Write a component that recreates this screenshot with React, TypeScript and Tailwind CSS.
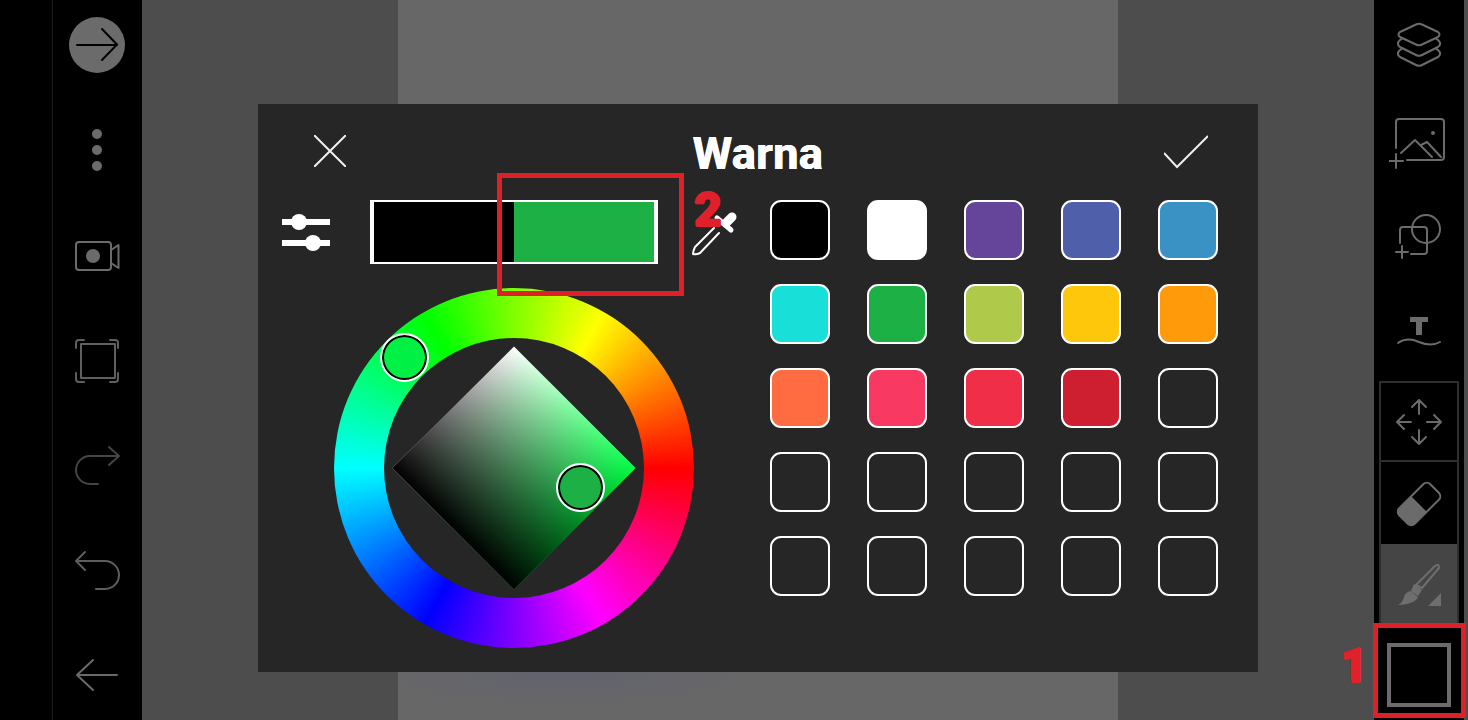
import React from 'react';

const swatches = [
  'bg-black', 'bg-white', 'bg-[#64459a]', 'bg-[#4f5fa9]', 'bg-[#3a92c4]',
  'bg-[#18dfd7]', 'bg-[#1cb045]', 'bg-[#afc94a]', 'bg-[#ffc70c]', 'bg-[#ff9a0b]',
  'bg-[#ff6c41]', 'bg-[#f83962]', 'bg-[#f12e48]', 'bg-[#cd1f2f]', 'bg-transparent',
  'bg-transparent', 'bg-transparent', 'bg-transparent', 'bg-transparent', 'bg-transparent',
  'bg-transparent', 'bg-transparent', 'bg-transparent', 'bg-transparent', 'bg-transparent',
];

function Icon({ color, children }: { color: string; children: React.ReactNode }) {
  return (
    <svg width="60" height="60" viewBox="0 0 60 60" fill="none" stroke={color} strokeWidth="2" strokeLinecap="round" strokeLinejoin="round">
      {children}
    </svg>
  );
}

function LeftBar() {
  return (
    <aside className="flex h-full w-[142px] shrink-0 bg-black">
      <div className="h-full w-[53px] border-r border-[#1c1c1c]" />
      <div className="flex h-full w-[88px] flex-col items-center justify-between py-[15px]">
        <div className="flex h-[60px] w-[60px] items-center justify-center">
          <div className="flex h-14 w-14 items-center justify-center rounded-full bg-[#6b6b6b]">
            <svg width="56" height="56" viewBox="0 0 56 56" fill="none" stroke="#000" strokeWidth="2" strokeLinecap="round">
              <path d="M8 28H48M33 12L48 27.500L33 43" />
            </svg>
          </div>
        </div>
        <div className="flex h-[60px] w-[60px] flex-col items-center justify-center gap-[6px]">
          <span className="h-[10px] w-[10px] rounded-full bg-[#6b6b6b]" />
          <span className="h-[10px] w-[10px] rounded-full bg-[#6b6b6b]" />
          <span className="h-[10px] w-[10px] rounded-full bg-[#6b6b6b]" />
        </div>
        <Icon color="#6b6b6b">
          <rect x="9" y="17" width="35" height="28" rx="3" />
          <circle cx="26" cy="31" r="7" fill="#6b6b6b" stroke="none" />
          <path d="M44 25L51.500 20V43L44 38" />
        </Icon>
        <Icon color="#5f5f5f">
          <rect x="14" y="14" width="34" height="34" />
          <path d="M9 18V13Q9 10 12 10H17M43 10H48Q51 10 51 13V18M9 43V49Q9 52 12 52H17M43 52H48Q51 52 51 49V43" />
        </Icon>
        <Icon color="#454545">
          <path d="M52 21H23A14 14 0 0 0 23 49H31M42 12L52 21L42 30" />
        </Icon>
        <Icon color="#5e5e5e">
          <path d="M9 21H38A14 14 0 0 1 38 49H29M18 12L9 21L18 30" />
        </Icon>
        <Icon color="#6a6a6a">
          <path d="M50 30H10M26 15L10 30L26 45" />
        </Icon>
      </div>
    </aside>
  );
}

function RightBar() {
  return (
    <aside className="mr-[4px] flex h-full w-[90px] shrink-0 flex-col items-center bg-black">
      <div className="flex h-[90px] items-center">
        <Icon color="#6b6b6b">
          <path d="M27 9.500Q30 8 33 9.500L49 17Q52 19.500 49 22L33 29.500Q30 31 27 29.500L11 22Q8 19.500 11 17Z" />
          <path d="M13 23.500L10.500 25.500Q7 29 11 32L27 40Q30 41.500 33 40L49 32Q53 29 49.500 25.500L47 23.500" />
          <path d="M13 33.500L10.500 35.500Q7 39 11 42L27 50Q30 51.500 33 50L49 42Q53 39 49.500 35.500L47 33.500" />
        </Icon>
      </div>
      <div className="flex h-[100px] items-center">
        <Icon color="#6b6b6b">
          <path d="M7 38V12Q7 9 10 9H52Q55 9 55 12V47Q55 50 52 50H18" />
          <path d="M7 44V58M0 51H14" />
          <circle cx="44" cy="23" r="2" fill="#6b6b6b" stroke="none" />
          <path d="M12 43L26 30L43 47M32 35L38 32L52 47" />
        </Icon>
      </div>
      <div className="flex h-[100px] items-center">
        <Icon color="#6b6b6b">
          <circle cx="37" cy="19" r="14" />
          <path d="M11 33V20Q11 17 14 17H35Q38 17 38 20V41Q38 44 35 44H22" />
          <path d="M13 36V48M7 42H19" />
        </Icon>
      </div>
      <div className="flex h-[90px] items-center">
        <Icon color="#6b6b6b">
          <path d="M21 12H39V17H33V30H27V17H21Z" fill="#6b6b6b" stroke="none" />
          <path d="M9 38C16 33 23 34 30 37S44 41 51 37" />
        </Icon>
      </div>
      <div className="mt-px flex w-[80px] flex-col border-2 border-b-0 border-[#2e2e2e]">
        <div className="flex h-[79px] items-center justify-center border-b-2 border-[#2e2e2e]">
          <Icon color="#6b6b6b">
            <path d="M30 8V22M23 15L30 8L37 15M30 52V38M23 45L30 52L37 45M8 30H22M15 23L8 30L15 37M52 30H38M45 23L52 30L45 37" />
          </Icon>
        </div>
        <div className="flex h-[82px] items-center justify-center pt-[2px]">
          <svg width="60" height="60" viewBox="0 0 60 60" fill="none" stroke="#6b6b6b" strokeWidth="2">
            <g transform="rotate(-45 30 30)">
              <rect x="8" y="19" width="44" height="22" rx="5" />
              <path d="M30 19H13Q8 19 8 24V36Q8 41 13 41H30Z" fill="#6b6b6b" stroke="none" />
            </g>
          </svg>
        </div>
        <div className="flex h-[79px] items-center justify-center bg-[#454545]">
          <svg width="60" height="60" viewBox="0 0 60 60" fill="none" stroke="#6e6e6e" strokeWidth="2" strokeLinejoin="round">
            <path d="M46 12Q50 9 50 14L33 34L27 31Z" />
            <path d="M25 30L33 36L29 42L22 37Z" fill="#6e6e6e" stroke="none" />
            <path d="M22 37L29 43Q26 50 9 51Q14 48 15 43Q16 38 22 37Z" fill="#6e6e6e" stroke="none" />
            <path d="M52 39V52H39Z" fill="#6e6e6e" stroke="none" />
          </svg>
        </div>
      </div>
      <div className="mt-[20px] h-16 w-16 border-4 border-[#6b6b6b]" />
    </aside>
  );
}

function ColorWheel() {
  return (
    <div className="relative ml-[52px] mt-6 flex h-[360px] w-[360px] items-center justify-center rounded-full bg-[conic-gradient(from_30deg,#ffff00_0deg,#ff0000_60deg,#ff00ff_120deg,#0000ff_180deg,#00ffff_240deg,#00ff00_300deg,#ffff00_360deg)]">
      <div className="flex h-[260px] w-[260px] items-center justify-center rounded-full bg-[#262626]">
        <div className="h-[172px] w-[172px] rotate-45 bg-[linear-gradient(to_top,#000000,transparent),linear-gradient(to_right,#ffffff,#00ff44)]" />
      </div>
      <div className="absolute left-[46px] top-[45px] h-[49px] w-[49px] rounded-full border-2 border-white bg-[#00f044] shadow-[inset_0_0_0_2px_#000]" />
      <div className="absolute left-[222px] top-[175px] h-[49px] w-[49px] rounded-full border-2 border-white bg-[#1cb045] shadow-[inset_0_0_0_2px_#000]" />
    </div>
  );
}

function ColorModal() {
  return (
    <div className="absolute left-[258px] top-[104px] flex h-[568px] w-[1000px] flex-col bg-[#262626]">
      <div className="grid h-[96px] grid-cols-[1fr_auto_1fr] px-[56px] pt-[31px]">
        <svg width="32" height="32" viewBox="0 0 32 32" stroke="#f0f0f0" strokeWidth="2">
          <path d="M0 0L32 32M32 0L0 32" />
        </svg>
        <div className="-mt-[4px] font-['Roboto',sans-serif] text-[45px] font-bold leading-none tracking-[0.4px] text-white [text-shadow:0.5px_0_0_#ffffff,-0.5px_0_0_#ffffff]">Warna</div>
        <svg className="-mr-[6px] justify-self-end" width="44" height="34" viewBox="0 0 44 34" fill="none" stroke="#f0f0f0" strokeWidth="2">
          <path d="M0 18L13 32L44 1" />
        </svg>
      </div>
      <div className="flex pl-6">
        <div className="flex w-[488px] flex-col">
          <div className="flex h-16 items-center">
            <svg width="48" height="40" viewBox="0 0 48 40" fill="#ffffff">
              <rect x="0" y="7" width="48" height="6" />
              <circle cx="17" cy="10" r="8" />
              <rect x="0" y="28" width="48" height="6" />
              <circle cx="31" cy="31" r="8" />
            </svg>
            <div className="ml-10 flex h-16 w-[288px] border-x-4 border-y-2 border-white">
              <div className="flex-1 bg-black" />
              <div className="flex-1 bg-[#1cb045]" />
            </div>
            <svg className="ml-[34px]" width="46" height="47" viewBox="0 0 46 47" fill="none" stroke="#ffffff" strokeLinecap="round" strokeLinejoin="round">
              <path d="M22 19L3 38Q1 42 1 45Q4 46 8 44L27 24" strokeWidth="2" />
              <path d="M25 9L39 21" strokeWidth="5" />
              <path d="M34 14L40 8" strokeWidth="9" />
            </svg>
          </div>
          <ColorWheel />
        </div>
        <div className="grid grid-cols-[repeat(5,60px)] content-start gap-x-[37px] gap-y-6">
          {swatches.map((c, i) => (
            <div key={i} className={`h-[60px] w-[60px] rounded-[11px] border-2 border-white ${c}`} />
          ))}
        </div>
      </div>
    </div>
  );
}

export default function App() {
  return (
    <div className="relative flex h-[720px] w-[1468px] overflow-hidden bg-[#4d4d4d]">
      <LeftBar />
      <main className="flex h-full flex-1 justify-center">
        <div className="h-full w-[720px] bg-[radial-gradient(ellipse_200px_36px_at_165px_672px,#62626f,transparent),linear-gradient(#676767,#676767)]" />
      </main>
      <RightBar />
      <ColorModal />

      {/* red annotations */}
      <div className="absolute left-[497px] top-[173px] h-[123px] w-[187px] border-[5px] border-[#dd2127]" />
      <div className="absolute left-[1373px] top-[623px] h-[95px] w-[93px] border-[5px] border-[#dd2127]" />
      <div className="absolute left-[694px] top-[186px] font-['Roboto',sans-serif] text-[48px] font-black leading-none text-[#e0202a] [text-shadow:1px_0_0_#e0202a,-1px_0_0_#e0202a,0_1px_0_#e0202a,0_-1px_0_#e0202a]">2</div>
      <div className="absolute left-[1340px] top-[642px] font-['Roboto',sans-serif] text-[48px] font-black leading-none text-[#e0202a] [text-shadow:1px_0_0_#e0202a,-1px_0_0_#e0202a,0_1px_0_#e0202a,0_-1px_0_#e0202a]">1</div>
    </div>
  );
}
